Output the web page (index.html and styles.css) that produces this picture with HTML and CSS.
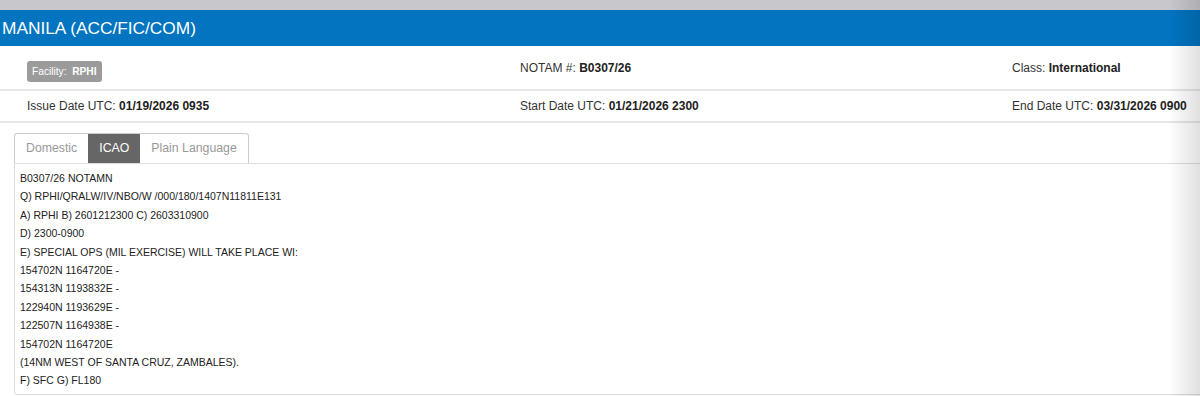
FILE: index.html
```html
<!DOCTYPE html>
<html lang="en">

<head>
  <meta charset="UTF-8">
  <title>NOTAM B0307/26</title>
  <link rel="stylesheet" href="styles.css">
</head>

<body>
  <div class="topband"></div>
  <div class="header">MANILA (ACC/FIC/COM)</div>

  <div class="info-row first">
    <div class="cell"><span class="badge">Facility:&nbsp; <b>RPHI</b></span></div>
    <div class="cell">NOTAM #: <b>B0307/26</b></div>
    <div class="cell">Class: <b>International</b></div>
  </div>
  <div class="info-row second">
    <div class="cell">Issue Date UTC: <b>01/19/2026 0935</b></div>
    <div class="cell">Start Date UTC: <b>01/21/2026 2300</b></div>
    <div class="cell">End Date UTC: <b>03/31/2026 0900</b></div>
  </div>

  <div class="notam">
    <div class="tabs">
      <span class="tab">Domestic</span>
      <span class="tab active">ICAO</span>
      <span class="tab">Plain Language</span>
    </div>
    <div class="notam-text">
      <div>B0307/26 NOTAMN</div>
      <div>Q) RPHI/QRALW/IV/NBO/W /000/180/1407N11811E131</div>
      <div>A) RPHI B) 2601212300 C) 2603310900</div>
      <div>D) 2300-0900</div>
      <div>E) SPECIAL OPS (MIL EXERCISE) WILL TAKE PLACE WI:</div>
      <div>154702N 1164720E -</div>
      <div>154313N 1193832E -</div>
      <div>122940N 1193629E -</div>
      <div>122507N 1164938E -</div>
      <div>154702N 1164720E</div>
      <div>(14NM WEST OF SANTA CRUZ, ZAMBALES).</div>
      <div>F) SFC G) FL180</div>
    </div>
  </div>

  <div class="edge-shade"></div>
</body>

</html>
```

FILE: styles.css
```css
body {
  font-family: 'Liberation Sans', Arial, sans-serif;
  background-color: #fff;
  color: #333;
  margin: 0;
  padding: 0;
  overflow: hidden;
}

*,
*:before,
*:after {
  box-sizing: border-box;
}

.topband {
  height: 10px;
  background: #c8c8cc;
}

.header {
  height: 36px;
  line-height: 36px;
  background: #0274c0;
  color: #fff;
  font-size: 17.3px;
  padding-left: 2px;
}

.info-row {
  display: grid;
  grid-template-columns: 493px 492px 1fr;
  align-items: center;
  padding-left: 27px;
  font-size: 12px;
  border-bottom: 2px solid #e6e6e6;
}

.info-row b {
  color: #222;
}

.info-row.first {
  height: 45px;
  padding-top: 1px;
}

.info-row.second {
  height: 32px;
}

.badge {
  display: inline-block;
  background: #9b9b9b;
  color: #fff;
  font-size: 10.2px;
  line-height: 11px;
  padding: 5px 5px;
  margin-top: 6px;
  border-radius: 3px;
}

.badge b {
  color: #fff;
}

.notam {
  margin: 10px -20px 0 14px;
}

.tabs {
  display: inline-flex;
  border: 1px solid #ccc;
  border-bottom: none;
  border-radius: 3px 3px 0 0;
  height: 30px;
}

.tab {
  font-size: 12.3px;
  color: #999;
  padding: 0 11px;
  line-height: 29px;
}

.tab.active {
  background: #666;
  color: #fff;
}

.notam-text {
  border: 1px solid #ddd;
  border-radius: 0 0 3px 3px;
  padding: 5px 5px 4px;
  font-size: 10.5px;
  line-height: 18.4px;
  color: #222;
}

.edge-shade {
  position: fixed;
  top: 0;
  right: 0;
  width: 32px;
  height: 100%;
  background: linear-gradient(to right, rgba(0, 0, 0, 0), rgba(0, 0, 0, 0.12));
  pointer-events: none;
}
```
